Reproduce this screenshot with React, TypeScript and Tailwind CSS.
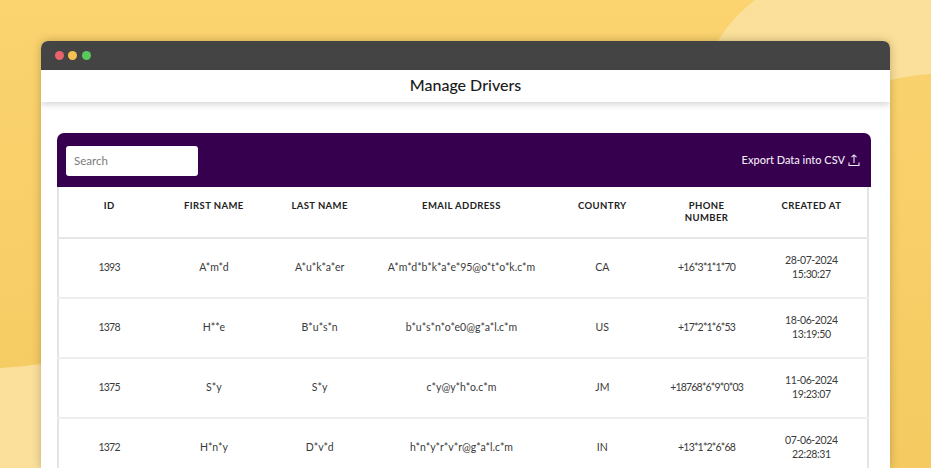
const rows = [
  { id: '1393', first: 'A*m*d', last: 'A*u*k*a*er', email: 'A*m*d*b*k*a*e*95@o*t*o*k.c*m', country: 'CA', phone: '+16*3*1*1*70', date: '28-07-2024', time: '15:30:27' },
  { id: '1378', first: 'H**e', last: 'B*u*s*n', email: 'b*u*s*n*o*e0@g*a*l.c*m', country: 'US', phone: '+17*2*1*6*53', date: '18-06-2024', time: '13:19:50' },
  { id: '1375', first: 'S*y', last: 'S*y', email: 'c*y@y*h*o.c*m', country: 'JM', phone: '+18768*6*9*0*03', date: '11-06-2024', time: '19:23:07' },
  { id: '1372', first: 'H*n*y', last: 'D*v*d', email: 'h*n*y*r*v*r@g*a*l.c*m', country: 'IN', phone: '+13*1*2*6*68', date: '07-06-2024', time: '22:28:31' },
]

export default function App() {
  return (
    <div className="relative h-[468px] w-[931px] overflow-hidden bg-linear-to-b from-[#fbd36f] to-[#f4ca61] font-['Lato',sans-serif]">
      {/* background blobs */}
      <svg className="absolute inset-0" width="931" height="468" viewBox="0 0 931 468">
        <path d="M755 0H931V74C915 75 905 77 890 80V41H718C728 24 740 12 755 0Z" fill="#fbe09c" />
        <path d="M0 368C14 367 28 366 41 364V468H0Z" fill="#fbe09c" />
      </svg>

      <div className="relative ml-[41px] mt-[41px] h-[427px] w-[849px] overflow-hidden rounded-t-[7px] bg-white shadow-[0_0_10px_rgba(90,70,20,0.35)]">
        <div className="flex h-[29px] items-center gap-[4.5px] bg-[#444444] pl-[13.5px]">
          <span className="h-[9px] w-[9px] rounded-full bg-[#e8646a]" />
          <span className="h-[9px] w-[9px] rounded-full bg-[#f6c151]" />
          <span className="h-[9px] w-[9px] rounded-full bg-[#5ac85a]" />
        </div>

        <div className="flex h-[32px] items-center justify-center bg-white pb-[2px] shadow-[0_3px_6px_rgba(0,0,0,0.15)]">
          <h1 className="text-[16px] font-medium text-[#1a1a1a]">Manage Drivers</h1>
        </div>

        <div className="mx-4 mt-[31px] w-[814px]">
          <div className="flex h-[54px] items-start justify-between rounded-t-[7px] bg-[#36004f] pl-[9px] pr-[11px] pt-[13px]">
            <div className="flex h-[30px] w-[132px] items-center rounded-[3px] bg-white pl-2 text-[11.5px] text-[#7c7c7c]">Search</div>
            <div className="flex items-center gap-[3px] pt-[7px] text-[11px] font-medium leading-[14px] text-[#f1e9f4]">
              Export Data into CSV
              <svg width="12" height="13" viewBox="0 0 12 13" fill="none" stroke="currentColor" strokeWidth="1.1">
                <path d="M6 9V1M3.5 3.2 6 .9l2.5 2.3M1 8.5V11.5H11V8.5" />
              </svg>
            </div>
          </div>

          <table className="w-[812px] table-fixed border-x-2 border-[#e4e4e4] text-center">
            <colgroup>
              <col className="w-[101px]" />
              <col className="w-[109px]" />
              <col className="w-[102px]" />
              <col className="w-[181px]" />
              <col className="w-[100px]" />
              <col className="w-[108px]" />
              <col className="w-[107px]" />
            </colgroup>
            <thead>
              <tr className="h-[51px] border-b-2 border-[#e6e6e6] align-top text-[9.5px] font-bold uppercase leading-[12px] tracking-[0.4px] text-[#222222]">
                <th className="pt-[13px]">ID</th>
                <th className="pt-[13px]">First Name</th>
                <th className="pt-[13px]">Last Name</th>
                <th className="pt-[13px]">Email Address</th>
                <th className="pt-[13px]">Country</th>
                <th className="px-6 pt-[13px]">Phone Number</th>
                <th className="pr-[5px] pt-[13px]">Created At</th>
              </tr>
            </thead>
            <tbody className="text-[10.5px] leading-[14px] text-[#3a3a3a]">
              {rows.map((r) => (
                <tr key={r.id} className="h-[60px] border-b-2 border-[#eeeeee]">
                  <td className="pb-[2px] tracking-[-0.8px]">{r.id}</td>
                  <td className="pb-[2px]">{r.first}</td>
                  <td className="pb-[2px]">{r.last}</td>
                  <td className="pb-[2px]">{r.email}</td>
                  <td className="pb-[2px]">{r.country}</td>
                  <td className="pb-[2px] tracking-[-0.8px]">{r.phone}</td>
                  <td className="pb-[2px] pr-[5px] tracking-[-0.4px]">
                    {r.date}
                    <br />
                    {r.time}
                  </td>
                </tr>
              ))}
            </tbody>
          </table>
        </div>
      </div>
    </div>
  )
}
